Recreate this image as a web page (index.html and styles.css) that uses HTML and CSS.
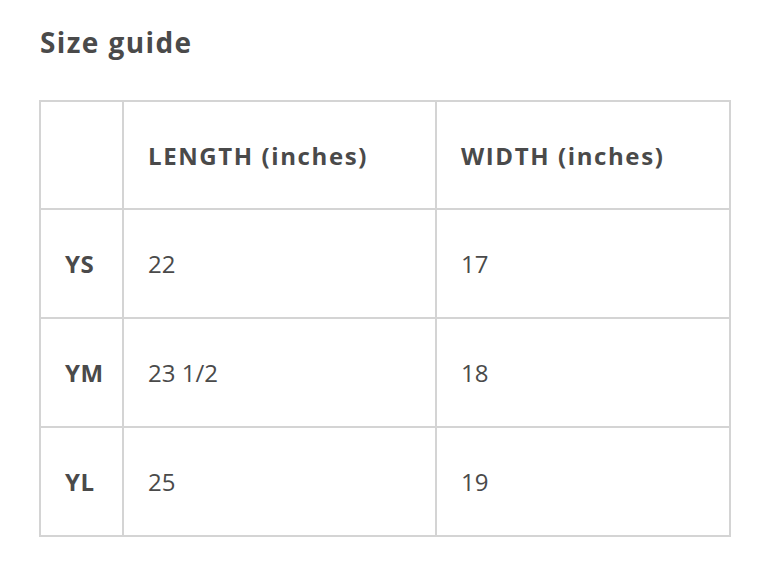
FILE: index.html
```html
<!DOCTYPE html>
<html>
<head>
<meta charset="utf-8">
<link rel="stylesheet" href="styles.css">
</head>
<body>
<div class="guide">
  <h2 class="title">Size guide</h2>
  <table class="sizes">
    <colgroup>
      <col class="c-label">
      <col class="c-length">
      <col class="c-width">
    </colgroup>
    <thead>
      <tr>
        <th class="label"></th>
        <th>LENGTH (inches)</th>
        <th>WIDTH (inches)</th>
      </tr>
    </thead>
    <tbody>
      <tr><th class="label">YS</th><td>22</td><td>17</td></tr>
      <tr><th class="label">YM</th><td>23 1/2</td><td>18</td></tr>
      <tr><th class="label">YL</th><td>25</td><td>19</td></tr>
    </tbody>
  </table>
</div>
</body>
</html>
```
FILE: styles.css
```css
html, body {
  margin: 0;
  padding: 0;
  background: #ffffff;
}
body {
  font-family: "Open Sans", "Lato", sans-serif;
  color: #4a4a4a;
}
.guide {
  padding: 22px 33px 0 39px;
}
.title {
  margin: 0 0 38px 1px;
  font-size: 28px;
  font-weight: 700;
  letter-spacing: 1.4px;
  line-height: 40px;
  color: #4a4a4a;
}
.sizes {
  border-collapse: collapse;
  table-layout: fixed;
  width: 690px;
  border: 2px solid #d4d4d4;
}
.c-label { width: 83px; }
.c-length { width: 313px; }
.c-width { width: 294px; }
.sizes th, .sizes td {
  border: 2px solid #d4d4d4;
  height: 107px;
  padding: 0 0 0 24px;
  text-align: left;
  font-size: 24px;
  vertical-align: middle;
  white-space: nowrap;
}
.sizes thead th {
  height: 106px;
}
.sizes th {
  font-weight: 700;
  letter-spacing: 1.6px;
}
.sizes td {
  font-weight: 400;
}
.sizes th.label {
  letter-spacing: 0.5px;
}
```
